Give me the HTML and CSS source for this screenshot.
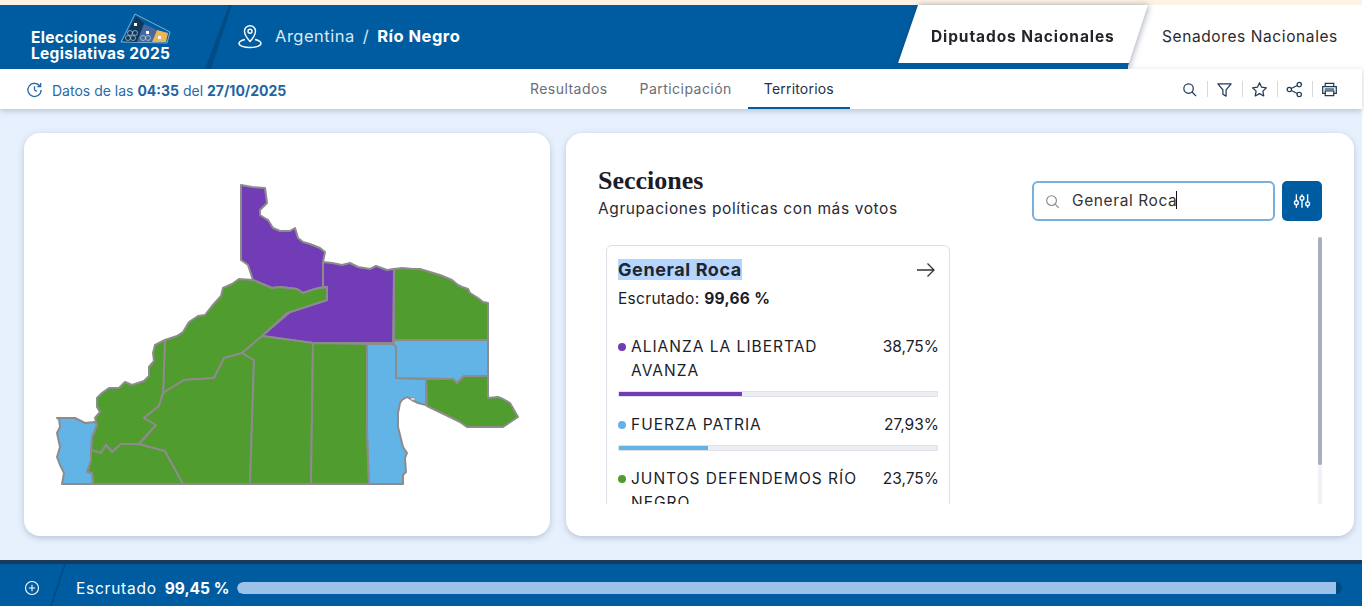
FILE: index.html
```html
<!DOCTYPE html>
<html lang="es">
<head>
<meta charset="utf-8">
<title>Elecciones Legislativas 2025</title>
<link rel="stylesheet" href="styles.css">
</head>
<body>
<div class="app">
  <div class="topstrip"></div>
  <header class="header">
    <div class="brand">
      <div class="brand-text">Elecciones<br>Legislativas 2025</div>
      <svg class="ballots" viewBox="120 12 52 32" aria-hidden="true">
        <polygon points="135,14 170,32 167,43 121,42" fill="none" stroke="#b6d0ea" stroke-width=".7"/>
        <polygon points="136,16 144,23 137,42 123,41" fill="#12385a"/>
        <polygon points="144,24 157,30 152,42 137,42" fill="#47689a"/>
        <polygon points="157,30 168,33 166,42 152,42" fill="#eeb653"/>
        <rect x="134" y="23" width="3" height="3" fill="#fff"/>
        <rect x="146" y="31" width="3" height="3" fill="#fff"/>
        <rect x="158" y="36" width="3" height="3" fill="#fff"/>
        <g fill="none" stroke="#cfe0f0" stroke-width=".6">
          <circle cx="130" cy="33" r="2.500"/>
          <circle cx="135" cy="33" r="2.500"/>
          <circle cx="128" cy="38" r="2.500"/>
          <circle cx="133" cy="38" r="2.500"/>
          <circle cx="143" cy="38" r="2.500"/>
          <circle cx="148" cy="38" r="2.500"/>
        </g>
      </svg>
    </div>
    <div class="slant"></div>
    <nav class="crumb">
      <svg class="pin" viewBox="0 0 26 26" fill="none" stroke="#fff" stroke-width="1.4" aria-hidden="true">
        <path d="M13 18.500C9.500 14.500 7.500 11.500 7.500 8.200a5.500 5.500 0 0 1 11 0c0 3.300-2 6.300-5.500 10.300z"/>
        <circle cx="13" cy="8.200" r="2"/>
        <path d="M8 16.500c-3.500.8-6 2.300-6 4 0 2.200 5 4 11 4s11-1.800 11-4c0-1.700-2.500-3.200-6-4"/>
      </svg>
      <span class="crumb-light">Argentina</span>
      <span class="crumb-sep">/</span>
      <strong class="crumb-bold">Río Negro</strong>
    </nav>
    <div class="tabs">
      <div class="tab tab-other"><span>Senadores Nacionales</span></div>
      <div class="tab-active"><div class="tab-face"><span>Diputados Nacionales</span></div></div>
    </div>
  </header>
  <div class="subbar">
    <div class="stamp">
      <svg class="clock" viewBox="0 0 18 18" fill="none" stroke="#2a6aa6" stroke-width="1.4" aria-hidden="true">
        <path d="M14.800 5.500A7 7 0 1 0 16 9.500"/>
        <path d="M15.500 2.200v3.600h-3.600"/>
        <path d="M9 5.500v4l2.500 1.500"/>
      </svg>
      <span>Datos de las <b>04:35</b> del <b>27/10/2025</b></span>
    </div>
    <nav class="views">
      <a class="view">Resultados</a>
      <a class="view">Participación</a>
      <a class="view view-active">Territorios</a>
    </nav>
    <div class="tools">
      <svg class="tool" viewBox="0 0 18 18" fill="none" stroke="#1f3a57" stroke-width="1.300"><circle cx="8" cy="8" r="5"/><path d="M11.700 11.700L16 16"/></svg>
      <i class="tool-sep"></i>
      <svg class="tool" viewBox="0 0 18 18" fill="none" stroke="#1f3a57" stroke-width="1.300"><path d="M2 3h14l-5.300 6.500V16l-3.400-2V9.500z" stroke-linejoin="round"/></svg>
      <i class="tool-sep"></i>
      <svg class="tool" viewBox="0 0 18 18" fill="none" stroke="#1f3a57" stroke-width="1.300"><path d="M9 1.800l2.200 4.700 5.100.7-3.700 3.500.9 5.100L9 13.400l-4.500 2.400.9-5.100-3.700-3.500 5.100-.7z" stroke-linejoin="round"/></svg>
      <i class="tool-sep"></i>
      <svg class="tool" viewBox="0 0 18 18" fill="none" stroke="#1f3a57" stroke-width="1.300"><circle cx="3.500" cy="9" r="2.300"/><circle cx="14" cy="3.800" r="2.300"/><circle cx="14" cy="14.200" r="2.300"/><path d="M5.600 8L12 4.800M5.600 10L12 13.200"/></svg>
      <i class="tool-sep"></i>
      <svg class="tool" viewBox="0 0 18 18" fill="none" stroke="#1f3a57" stroke-width="1.300"><path d="M4.500 6V2.500h9V6M4.500 13H1.800V6h14.400v7h-2.700"/><rect x="4.500" y="10.500" width="9" height="5"/><path d="M4 8.500h10"/></svg>
    </div>
  </div>
  <main class="main">
    <section class="card map-card">
      <svg class="map" viewBox="24 133 526 403" aria-label="Mapa de Río Negro">
        <g stroke="#8c8c8c" stroke-width="2" stroke-linejoin="round">
          <path fill="#733cb7" d="M241 185L252 187L265 188L266 195L267 203L260 210L260 215L266 219L268 220L273 228L280 231L290 231L295 228L298 238L303 242L310 244L320 248L325 252L323 262L323 287L315 289L303 293L297 289L280 287L272 288L253 280L248 265L241 260Z"/>
          <path fill="#733cb7" d="M323 262L332 263L342 265L350 263L358 267L370 269L376 266L387 270L394 269L393 343L313 343L270 337L262 336L290 312L327 300L327 287L323 287Z"/>
          <path fill="#509c2f" d="M165 340L177 336L183 332L189 322L198 316L205 315L212 306L221 296L223 288L232 284L239 279L253 280L272 288L280 287L297 289L303 293L315 289L327 287L327 300L287 313L262 336L242 353L224 358L214 378L184 380L163 393Z"/>
          <path fill="#509c2f" d="M165 340L155 345L153 353L154 361L149 367L149 376L144 381L132 385L125 382L119 388L109 388L102 393L97 398L97 407L100 412L95 418L97 425L92 437L91 450L101 453L106 445L112 452L121 444L139 444L156 425L144 418L159 406L163 393Z"/>
          <path fill="#509c2f" d="M91 450L91 460L87 472L92 473L93 484L183 484L165 451L139 444L121 444L112 452L106 445L101 453Z"/>
          <path fill="#62b3e6" d="M57 418L75 418L85 423L95 422L97 425L92 437L91 450L91 460L87 472L92 473L93 484L62 484L64 473L60 465L57 457L60 447L57 433L60 427L59 419Z"/>
          <path fill="#509c2f" d="M163 393L184 380L214 378L224 358L242 353L254 360L250 484L183 484L165 451L139 444L156 425L144 418L159 406Z"/>
          <path fill="#509c2f" d="M242 353L262 336L313 343L311 484L250 484L254 360Z"/>
          <path fill="#509c2f" d="M313 343L367 344L367 430L369 484L311 484Z"/>
          <path fill="#62b3e6" d="M367 344L393 344L396 347L396 378L426 379L426 405L418 403L412 400L407 397L402 400L400 403L398 413L398 427L403 447L407 453L405 458L406 472L403 475L403 484L369 484L367 430Z"/>
          <path fill="#509c2f" d="M394 269L402 268L413 269L420 269L430 272L440 275L452 280L458 285L462 287L468 289L470 293L478 298L483 302L488 303L488 340L394 340Z"/>
          <path fill="#62b3e6" d="M395 340L488 340L488 376L464 376L457 383L453 379L396 378L396 347L393 343Z"/>
          <path fill="#509c2f" d="M426 379L453 379L457 383L464 376L488 376L488 398L498 397L503 399L510 403L518 417L503 427L467 427L460 422L452 418L427 406Z"/>
          <ellipse cx="413" cy="399" rx="3" ry="1.200" fill="#fff" stroke-width="1"/>
        </g>
      </svg>
    </section>
    <section class="card list-card">
      <div class="list-head">
        <div>
          <h1 class="list-title">Secciones</h1>
          <p class="list-sub">Agrupaciones políticas con más votos</p>
        </div>
        <div class="search-row">
          <div class="search">
            <svg class="search-icon" viewBox="0 0 16 16" fill="none" stroke="#8a8a8a" stroke-width="1.200"><circle cx="7" cy="7" r="5.200"/><path d="M11 11l3.700 3.700"/></svg>
            <span class="search-value">General Roca</span><i class="caret"></i>
          </div>
          <button class="filter-btn" type="button" aria-label="Filtros">
            <svg viewBox="0 0 16 16" fill="none" stroke="#fff" stroke-width="1.200"><path d="M3 2v12M8 2v12M13 2v12"/><circle cx="3" cy="9.500" r="1.700" fill="#005ca0"/><circle cx="8" cy="5.500" r="1.700" fill="#005ca0"/><circle cx="13" cy="10.500" r="1.700" fill="#005ca0"/></svg>
          </button>
        </div>
      </div>
      <div class="list-body">
        <article class="section-card">
          <div class="section-top">
            <h2 class="section-name"><span class="selected">General Roca</span></h2>
            <svg class="arrow" viewBox="0 0 20 16" fill="none" stroke="#333" stroke-width="1.300"><path d="M1 8h17M11.500 1.500L18 8l-6.500 6.500"/></svg>
          </div>
          <p class="section-count">Escrutado: <b>99,66 %</b></p>
          <div class="party">
            <div class="party-row"><i class="dot dot-purple"></i><span class="party-name">ALIANZA LA LIBERTAD AVANZA</span><span class="party-pct">38,75%</span></div>
            <div class="bar"><div class="fill fill-purple" style="width:38.75%"></div></div>
          </div>
          <div class="party">
            <div class="party-row"><i class="dot dot-blue"></i><span class="party-name">FUERZA PATRIA</span><span class="party-pct">27,93%</span></div>
            <div class="bar"><div class="fill fill-blue" style="width:27.93%"></div></div>
          </div>
          <div class="party">
            <div class="party-row"><i class="dot dot-green"></i><span class="party-name">JUNTOS DEFENDEMOS RÍO NEGRO</span><span class="party-pct">23,75%</span></div>
            <div class="bar"><div class="fill fill-green" style="width:23.75%"></div></div>
          </div>
        </article>
        <div class="scrollbar"><div class="thumb"></div></div>
      </div>
    </section>
  </main>
  <footer class="footer">
    <svg class="plus" viewBox="0 0 16 16" fill="none" stroke="#fff" stroke-width="1.100"><circle cx="8" cy="8" r="6.500"/><path d="M8 4.800v6.400M4.800 8h6.400"/></svg>
    <div class="foot-slant"></div>
    <span class="foot-label">Escrutado</span>
    <b class="foot-value">99,45 %</b>
    <div class="foot-bar"><div class="foot-fill" style="width:99.45%"></div></div>
  </footer>
</div>
</body>
</html>
```
FILE: styles.css
```css
* { box-sizing: border-box; }
html, body { margin: 0; height: 100%; overflow: hidden; background: #fff; }
body { font-family: Inter, "Open Sans", "Liberation Sans", sans-serif; color: #1c1c28; }
.app { width: 1362px; height: 606px; display: flex; flex-direction: column; background: #e7f1fd; }
.topstrip { height: 5px; background: #fdf3e5; flex: none; }

.header { height: 64px; flex: none; background: #005ca0; display: flex; align-items: center; position: relative; color: #fff; }
.brand { width: 205px; padding-left: 31px; position: relative; height: 100%; display: flex; align-items: center; }
.brand-text { font-size: 15.500px; letter-spacing: .3px; line-height: 16px; font-weight: 700; padding-top: 17px; white-space: nowrap; position: relative; z-index: 1; }
.ballots { position: absolute; left: 120px; top: 7px; width: 52px; height: 32px; }
.slant { width: 27px; height: 100%; flex: none; background: #004c86; clip-path: polygon(0 100%, 6px 100%, 27px 0, 24px 0); margin-right: 5px; }
.crumb { display: flex; align-items: center; font-size: 16.500px; letter-spacing: .5px; padding-bottom: 3px; }
.pin { width: 26px; height: 26px; margin-right: 12px; }
.crumb-light { color: #dbe8f4; }
.crumb-sep { margin: 0 8px; color: #dbe8f4; }
.crumb-bold { font-weight: 700; }
.tabs { position: absolute; right: 0; top: 0; height: 100%; width: 466px; }
.tab-active { position: absolute; left: 0; top: 0; width: 252px; height: 100%; filter: drop-shadow(1px 0 3px rgba(20, 40, 70, .4)); }
.tab-face { height: 100%; display: flex; align-items: center; font-size: 15.500px; letter-spacing: .9px; padding-bottom: 2px; font-weight: 700; color: #24252b; background: linear-gradient(#fff 0 58px, #005ca0 58px); clip-path: polygon(22px 0, 100% 0, 231px 100%, 0 100%); padding-left: 35px; }
.tab-other { position: absolute; left: 232px; right: 0; top: 0; height: 100%; display: flex; align-items: center; font-size: 15.500px; letter-spacing: .6px; padding-bottom: 2px; background: #fff; padding-left: 34px; color: #2a2a30; }

.subbar { height: 40px; flex: none; background: #fff; display: flex; align-items: center; position: relative; box-shadow: 0 2px 6px rgba(40, 60, 100, .25); z-index: 2; padding-left: 26px; }
.stamp { display: flex; align-items: center; font-size: 14px; color: #2a6aa6; padding-top: 3px; }
.stamp b { font-weight: 700; color: #22649f; }
.clock { width: 17px; height: 17px; margin-right: 9px; margin-top: -2px; }
.views { position: absolute; left: 514px; top: 0; height: 100%; display: flex; }
.view { font-size: 14px; letter-spacing: .45px; color: #6a6d78; padding: 0 16px 1px; height: 100%; display: flex; align-items: center; }
.view-active { color: #23324a; border-bottom: 2px solid #005ca0; letter-spacing: .2px; padding: 1px 16px 0; }
.tools { position: absolute; right: 24px; top: 0; height: 100%; display: flex; align-items: center; gap: 8.500px; }
.tool { width: 17px; height: 17px; }
.tool-sep { width: 1px; height: 16px; background: #d5d8de; }

.main { flex: 1; display: flex; gap: 16px; padding: 24px 8px 24px 24px; min-height: 0; }
.card { background: #fff; border-radius: 16px; box-shadow: 0 2px 6px rgba(60, 80, 120, .28); }
.map-card { width: 526px; flex: none; }
.map { width: 526px; height: 403px; display: block; }
.list-card { width: 788px; flex: none; position: relative; padding: 34px 32px 0 32px; }
.list-head { display: flex; justify-content: space-between; align-items: flex-start; }
.list-title { font-family: "Liberation Serif", serif; font-size: 26px; line-height: 28px; margin: 0 0 4px; font-weight: 700; color: #1c1c28; }
.list-sub { margin: 0; font-size: 15.500px; letter-spacing: .6px; line-height: 20px; color: #2a2a35; }
.search-row { display: flex; gap: 7px; margin-top: 14px; }
.search { width: 243px; height: 40px; border: 2px solid #7aade0; border-radius: 6px; display: flex; align-items: center; padding-left: 11px; padding-bottom: 2px; font-size: 15.500px; letter-spacing: .6px; color: #333; }
.search-icon { width: 15px; height: 15px; margin-right: 12px; margin-top: 2px; }
.caret { width: 1px; height: 18px; background: #111; margin-left: -1px; }
.filter-btn { width: 40px; height: 40px; border: 0; padding: 11px; background: #005ca0; border-radius: 5px; }
.filter-btn svg { display: block; width: 18px; height: 18px; }
.list-body { position: absolute; left: 40px; right: 32px; top: 104px; height: 267px; overflow: hidden; }
.section-card { width: 344px; margin-top: 8px; border: 1px solid #dcdfe6; border-radius: 6px 6px 0 0; padding: 12px 11px 12px; }
.section-top { display: flex; justify-content: space-between; align-items: center; height: 24px; }
.section-name { margin: 0; font-size: 18px; letter-spacing: .6px; line-height: 22px; font-weight: 700; color: #23242c; }
.selected { background: #b4d5fe; }
.arrow { width: 20px; height: 16px; margin-right: 2px; }
.section-count { margin: 6px 0 0; font-size: 15.500px; letter-spacing: .3px; line-height: 22px; }
.section-count b { font-weight: 700; }
.section-count + .party { margin-top: 24px; }
.party + .party { margin-top: 15px; }
.party-row { display: flex; align-items: flex-start; font-size: 15.500px; line-height: 24px; padding-top: 1px; }
.dot { width: 8px; height: 8px; border-radius: 50%; flex: none; margin: 8px 5px 0 0; }
.dot-purple { background: #733cb7; }
.dot-blue { background: #62b3e6; }
.dot-green { background: #509c2f; }
.party-name { flex: 1; padding-right: 20px; letter-spacing: 1px; }
.party-pct { flex: none; margin-right: -1px; }
.bar { height: 6px; margin-top: 8px; background: #eceef4; border: 1px solid #dfe1e8; border-radius: 1px; position: relative; overflow: hidden; }
.fill { position: absolute; left: 0; top: -1px; bottom: -1px; }
.fill-purple { background: #733cb7; }
.fill-blue { background: #62b3e6; }
.fill-green { background: #509c2f; }
.scrollbar { position: absolute; right: 0; top: 0; width: 4px; height: 100%; background: #f1f1f6; }
.thumb { height: 228px; background: #a9adbf; border-radius: 2px; }

.footer { height: 46px; flex: none; background: #005ca0; border-top: 4px solid #1a3a5c; display: flex; align-items: center; color: #fff; padding: 6px 20px 0 24px; }
.plus { width: 16px; height: 16px; flex: none; }
.foot-slant { width: 16px; height: 42px; flex: none; margin: -6px 10px 0 10px; background: #004c86; clip-path: polygon(0 100%, 2px 100%, 16px 0, 14px 0); }
.foot-label { font-size: 15.500px; letter-spacing: .75px; margin-right: 8px; }
.foot-value { font-size: 15.500px; font-weight: 700; margin-right: 8px; white-space: nowrap; }
.foot-bar { flex: 1; height: 12px; border-radius: 6px; background: #004a82; overflow: hidden; }
.foot-fill { height: 100%; background: #9cc2ea; border-radius: 6px 0 0 6px; }
```
